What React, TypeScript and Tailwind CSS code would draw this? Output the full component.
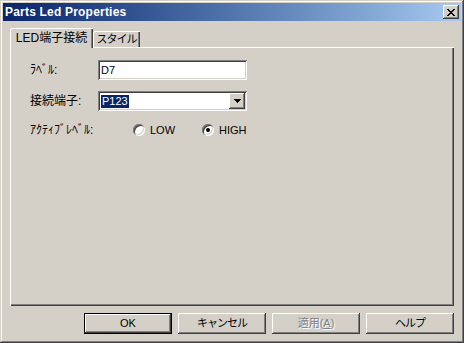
const raised =
  'shadow-[inset_-1px_-1px_#404040,inset_1px_1px_#ffffff,inset_-2px_-2px_#808080,inset_2px_2px_#d4d0c8]';
const sunken =
  'shadow-[inset_1px_1px_#808080,inset_-1px_-1px_#ffffff,inset_2px_2px_#404040,inset_-2px_-2px_#d4d0c8]';

function CloseGlyph() {
  return (
    <svg width="8" height="7" viewBox="0 0 8 7" shapeRendering="crispEdges">
      <path
        fill="#000"
        d="M0 0h2v1H0z M6 0h2v1H6z M1 1h2v1H1z M5 1h2v1H5z M2 2h4v1H2z M3 3h2v1H3z M2 4h4v1H2z M1 5h2v1H1z M5 5h2v1H5z M0 6h2v1H0z M6 6h2v1H6z"
      />
    </svg>
  );
}

function ArrowGlyph() {
  return (
    <svg width="7" height="4" viewBox="0 0 7 4" shapeRendering="crispEdges">
      <path fill="#000" d="M0 0h7v1H0z M1 1h5v1H1z M2 2h3v1H2z M3 3h1v1H3z" />
    </svg>
  );
}

function Radio({ label, checked }: { label: string; checked?: boolean }) {
  return (
    <div className="flex items-center gap-[5px]">
      <div
        className={`w-[12px] h-[12px] rounded-full bg-white flex items-center justify-center ${sunken}`}
      >
        {checked && <div className="w-[4px] h-[4px] rounded-full bg-black" />}
      </div>
      <span className="leading-none">{label}</span>
    </div>
  );
}

function Button({
  children,
  primary,
  disabled,
}: {
  children: React.ReactNode;
  primary?: boolean;
  disabled?: boolean;
}) {
  return (
    <div
      className={`w-[88px] h-[21px] flex items-center justify-center ${
        primary ? 'border border-black' : ''
      }`}
    >
      <div
        className={`w-full h-full flex items-center justify-center ${raised} ${
          disabled ? 'text-[#808080] [text-shadow:1px_1px_0_#ffffff]' : 'text-black'
        }`}
      >
        {children}
      </div>
    </div>
  );
}

export default function App() {
  return (
    <div
      className={`w-[464px] h-[343px] bg-[#d4d0c8] p-[3px] flex flex-col font-['Liberation_Sans','Noto_Sans_CJK_JP',sans-serif] text-[11px] text-black select-none shadow-[inset_-1px_-1px_#404040,inset_1px_1px_#d4d0c8,inset_-2px_-2px_#808080,inset_2px_2px_#ffffff]`}
    >
      {/* title bar */}
      <div className="h-[18px] flex items-center bg-linear-to-r from-[#0a246a] to-[#a6caf0] pl-[2px] pr-[2px]">
        <span className="flex-1 text-white font-bold text-[12px] leading-none tracking-[0.2px]">
          Parts Led Properties
        </span>
        <div className={`w-[16px] h-[14px] bg-[#d4d0c8] flex items-center justify-center ${raised}`}>
          <CloseGlyph />
        </div>
      </div>

      <div className="flex-1 flex flex-col px-[7px] pt-[7px]">
        {/* tabs */}
        <div className="flex items-end h-[19px]">
          <div className="relative z-10 w-[83px] h-[20px] mb-[-1px] bg-[#d4d0c8] rounded-tl-[2px] flex items-center justify-center text-[12px] leading-none shadow-[inset_1px_1px_#ffffff,inset_-1px_0_#404040,inset_-2px_0_#808080]">
            LED端子接続
          </div>
          <div className="w-[47px] h-[16px] bg-[#d4d0c8] rounded-tl-[2px] flex items-center justify-center leading-none tracking-[-1px] shadow-[inset_1px_1px_#ffffff,inset_-1px_0_#404040,inset_-2px_0_#808080]">
            スタイル
          </div>
        </div>

        {/* panel */}
        <div className="h-[259px] pt-[13px] pl-[20px] shadow-[inset_1px_1px_#ffffff,inset_-1px_-1px_#404040,inset_-2px_-2px_#808080]">
          <div className="flex items-center h-[20px]">
            <span className="w-[68px] text-[12px] leading-none">ﾗﾍﾞﾙ:</span>
            <div className={`w-[149px] h-[20px] bg-white flex items-center pl-[3px] ${sunken}`}>
              D7
            </div>
          </div>

          <div className="flex items-center h-[20px] mt-[11px]">
            <span className="w-[68px] text-[12px] leading-none">接続端子:</span>
            <div className={`w-[149px] h-[20px] bg-white flex items-center p-[2px] ${sunken}`}>
              <div className="flex-1 flex items-center pl-[1px]">
                <span className="bg-[#0a246a] text-white leading-[13px] px-[1px]">P123</span>
              </div>
              <div className={`w-[16px] h-[16px] bg-[#d4d0c8] flex items-center justify-center ${raised}`}>
                <ArrowGlyph />
              </div>
            </div>
          </div>

          <div className="flex items-center h-[20px] mt-[9px]">
            <span className="w-[103px] text-[12px] leading-none">ｱｸﾃｨﾌﾞﾚﾍﾞﾙ:</span>
            <div className="flex items-center gap-[27px]">
              <Radio label="LOW" />
              <Radio label="HIGH" checked />
            </div>
          </div>
        </div>

        {/* buttons */}
        <div className="mt-[7px] flex justify-end gap-[6px]">
          <Button primary>OK</Button>
          <Button>
            <span className="tracking-[-1px]">キャンセル</span>
          </Button>
          <Button disabled>
            <span>
              適用(<span className="underline">A</span>)
            </span>
          </Button>
          <Button>
            <span className="tracking-[-1px]">ヘルプ</span>
          </Button>
        </div>
      </div>
    </div>
  );
}
